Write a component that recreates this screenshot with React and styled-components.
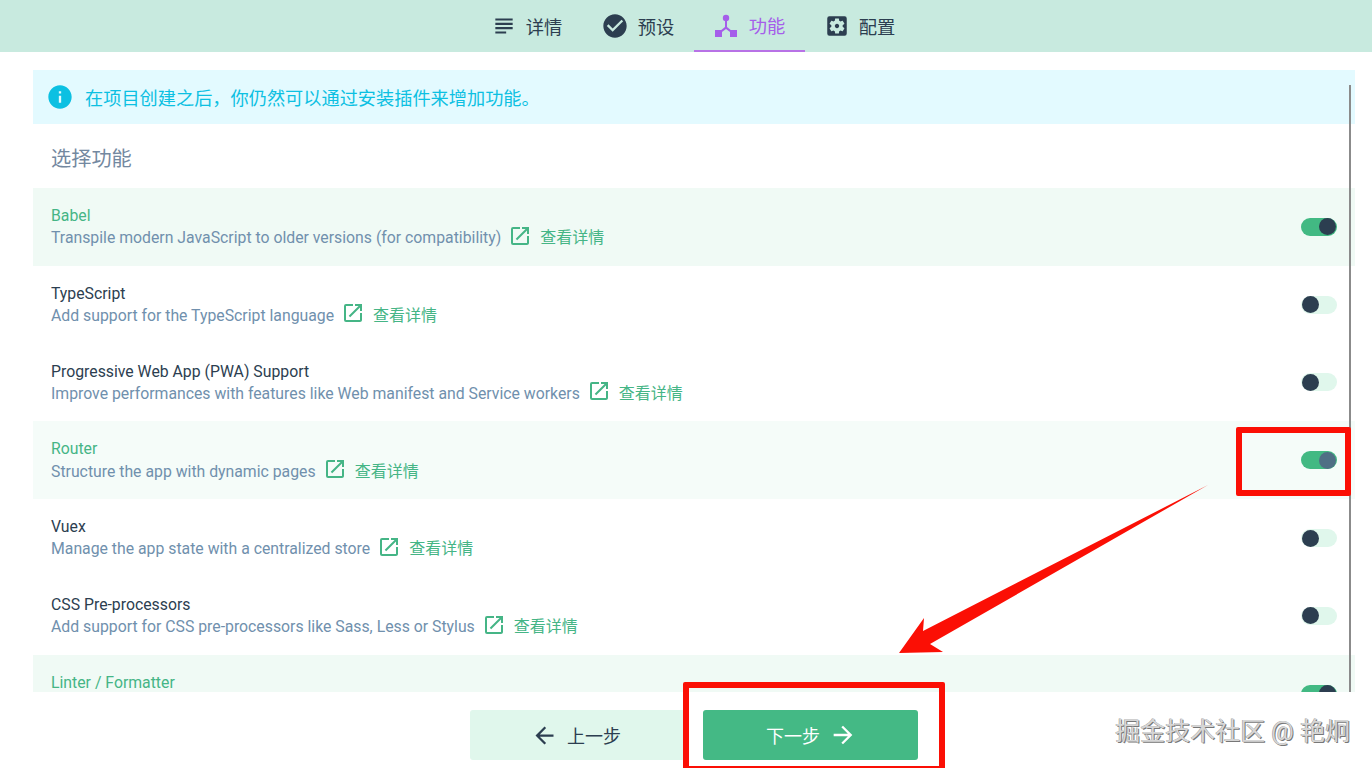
import React from "react";
import styled, { createGlobalStyle } from "styled-components";
import { MdSubject, MdCheckCircle, MdSettingsApplications, MdInfo, MdOpenInNew, MdArrowBack, MdArrowForward } from "react-icons/md";

const Global = createGlobalStyle`
  html, body { margin: 0; padding: 0; background: #fff; overflow: hidden; }
  body { font-family: Roboto, "Noto Sans CJK SC", sans-serif; color: #2c3e50; }
`;

const Page = styled.div`
  position: relative;
  width: 1372px;
  height: 768px;
  display: flex;
  flex-direction: column;
  overflow: hidden;
`;

const TabBar = styled.nav`
  flex: none;
  height: 52px;
  background: #c8eadf;
  display: flex;
  justify-content: center;
  padding-left: 16px;
`;

const Tab = styled.div`
  width: 111px;
  height: 52px;
  box-sizing: border-box;
  display: flex;
  align-items: center;
  justify-content: center;
  gap: ${(p) => (p.$active ? "11px" : "9px")};
  font-size: 18.3px;
  color: ${(p) => (p.$active ? "#a55eea" : "#2c3e50")};
  border-bottom: 2px solid ${(p) => (p.$active ? "#b872e6" : "transparent")};
  padding: ${(p) => (p.$active ? "0" : "2px 2px 0 0")};
  svg { flex: none; }
`;

const Content = styled.main`
  position: relative;
  flex: 1;
  min-height: 0;
  overflow: hidden;
  padding: 18px 17px 0 33px;
`;

const Scrollbar = styled.div`
  position: absolute;
  left: 1349px;
  top: 33px;
  bottom: 0;
  width: 2px;
  background: #8b8b8b;
`;

const Alert = styled.div`
  height: 54px;
  display: flex;
  align-items: center;
  gap: 11px;
  padding-left: 13px;
  background: #e3faff;
  color: #0cc0e2;
  font-size: 18.2px;
`;

const Heading = styled.h2`
  margin: 0;
  height: 64px;
  box-sizing: border-box;
  display: flex;
  align-items: center;
  padding: 2px 0 0 18px;
  font-size: 20.2px;
  font-weight: 400;
  color: #7388a0;
`;

const Row = styled.div`
  height: 77.8px;
  flex: none;
  box-sizing: border-box;
  display: flex;
  align-items: center;
  justify-content: space-between;
  padding: 0 18px;
  background: ${(p) => (p.$hover ? "#f5fcf9" : p.$on ? "#f0faf5" : "#fff")};
`;

const Info = styled.div`
  align-self: flex-start;
  padding-top: 17px;
  display: flex;
  flex-direction: column;
`;

const Name = styled.div`
  font-size: 15.8px;
  line-height: 21px;
  color: ${(p) => (p.$on ? "#45b586" : "#2c3e50")};
`;

const Desc = styled.div`
  display: flex;
  align-items: center;
  margin-top: -0.4px;
  font-size: 15.8px;
  line-height: 21px;
  color: #7090ad;
`;

const More = styled.span`
  display: inline-flex;
  align-items: center;
  gap: 8px;
  margin-left: 7px;
  font-size: 16px;
  color: #45b586;
  svg { position: relative; top: -2px; }
`;

const Toggle = styled.div`
  width: 36px;
  height: 18px;
  border-radius: 9px;
  background: ${(p) => (p.$on ? "#42b983" : "#e0f7ec")};
  display: flex;
  align-items: center;
  justify-content: ${(p) => (p.$on ? "flex-end" : "flex-start")};
  padding: 0 1px;
  box-sizing: border-box;
`;

const Knob = styled.div`
  width: 17px;
  height: 17px;
  border-radius: 50%;
  background: ${(p) => (p.$hover ? "#4f6f85" : "#2c3e50")};
`;

const Footer = styled.footer`
  flex: none;
  height: 76px;
  box-sizing: border-box;
  background: #fff;
  display: flex;
  gap: 18px;
  padding: 18px 0 8px 470px;
`;

const Button = styled.div`
  width: 215px;
  height: 50px;
  box-sizing: border-box;
  border-radius: 3px;
  display: flex;
  align-items: center;
  justify-content: center;
  gap: 9px;
  font-size: 18px;
  padding: ${(p) => (p.$primary ? "0 0 0 2px" : "0 3px 0 0")};
  background: ${(p) => (p.$primary ? "#44b985" : "#e0f7ec")};
  color: ${(p) => (p.$primary ? "#fff" : "#2c3e50")};
`;

const RedBox = styled.div`
  position: absolute;
  left: ${(p) => p.$x}px;
  top: ${(p) => p.$y}px;
  width: ${(p) => p.$w}px;
  height: ${(p) => p.$h}px;
  box-sizing: border-box;
  border: 6px solid #fb0f05;
  border-radius: 2px;
`;

const ArrowDrawing = styled.svg`
  position: absolute;
  left: 0;
  top: 0;
  pointer-events: none;
`;

const Watermark = styled.div`
  position: absolute;
  right: 22px;
  top: 716px;
  font-size: 25px;
  line-height: 32px;
  white-space: pre;
  color: #d6d6d6;
  text-shadow: 1px 1px 0 #777, -0.5px -0.5px 0 #999;
`;

const ForkIcon = () => (
  <svg width="24" height="24" viewBox="0 0 24 24" fill="#a55eea">
    <circle cx="12" cy="5" r="3.2" />
    <rect x="1" y="17" width="7" height="7" />
    <rect x="16" y="17" width="7" height="7" />
    <path d="M11 7h2v7l5 4-1.300 1.500L12 16l-4.700 3.500L6 18l5-4z" />
  </svg>
);

const features = [
  { name: "Babel", desc: "Transpile modern JavaScript to older versions (for compatibility)", on: true },
  { name: "TypeScript", desc: "Add support for the TypeScript language" },
  { name: "Progressive Web App (PWA) Support", desc: "Improve performances with features like Web manifest and Service workers" },
  { name: "Router", desc: "Structure the app with dynamic pages", on: true, hover: true },
  { name: "Vuex", desc: "Manage the app state with a centralized store" },
  { name: "CSS Pre-processors", desc: "Add support for CSS pre-processors like Sass, Less or Stylus" },
  { name: "Linter / Formatter", on: true },
];

export default function App() {
  return (
    <Page>
      <Global />
      <TabBar>
        <Tab><MdSubject size={26} /><span>详情</span></Tab>
        <Tab><MdCheckCircle size={28} /><span>预设</span></Tab>
        <Tab $active><ForkIcon /><span>功能</span></Tab>
        <Tab><MdSettingsApplications size={26} /><span>配置</span></Tab>
      </TabBar>
      <Content>
        <Alert><MdInfo size={28} /><span>在项目创建之后，你仍然可以通过安装插件来增加功能。</span></Alert>
        <Heading>选择功能</Heading>
        {features.map((f) => (
          <Row key={f.name} $on={f.on} $hover={f.hover}>
            <Info>
              <Name $on={f.on}>{f.name}</Name>
              {f.desc && (
                <Desc>
                  {f.desc}
                  <More><MdOpenInNew size={24} /><span>查看详情</span></More>
                </Desc>
              )}
            </Info>
            <Toggle $on={f.on}><Knob $hover={f.hover} /></Toggle>
          </Row>
        ))}
        <Scrollbar />
      </Content>
      <Footer>
        <Button><MdArrowBack size={27} /><span>上一步</span></Button>
        <Button $primary><span>下一步</span><MdArrowForward size={28} /></Button>
      </Footer>
      <Watermark>掘金技术社区 @ 艳炯</Watermark>
      <RedBox $x={1236} $y={427} $w={115} $h={69} />
      <RedBox $x={683} $y={682} $w={262} $h={90} />
      <ArrowDrawing width="1372" height="768" viewBox="0 0 1372 768">
        <polygon points="899,653 924,618 923,631 1208,485 930,644 943,652" fill="#fb0f05" />
      </ArrowDrawing>
    </Page>
  );
}
